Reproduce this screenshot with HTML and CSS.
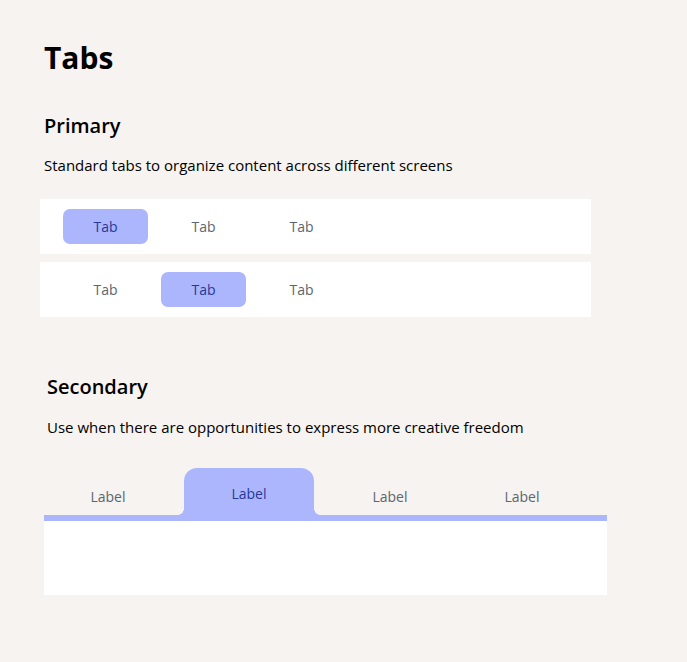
FILE: index.html
```html
<!DOCTYPE html>
<html lang="en">
<head>
<meta charset="utf-8">
<title>Tabs</title>
<link rel="stylesheet" href="styles.css">
</head>
<body>
<main class="page">
  <h1 class="title">Tabs</h1>

  <section class="primary">
    <h2 class="section-title">Primary</h2>
    <p class="section-desc">Standard tabs to organize content across different screens</p>
    <div class="pill-bar">
      <div class="pill-tab is-active">Tab</div>
      <div class="pill-tab">Tab</div>
      <div class="pill-tab">Tab</div>
    </div>
    <div class="pill-bar">
      <div class="pill-tab">Tab</div>
      <div class="pill-tab is-active">Tab</div>
      <div class="pill-tab">Tab</div>
    </div>
  </section>

  <section class="secondary">
    <h2 class="section-title">Secondary</h2>
    <p class="section-desc">Use when there are opportunities to express more creative freedom</p>
    <div class="folder">
      <div class="folder-tabs">
        <div class="folder-tab t1">Label</div>
        <div class="folder-tab t2 is-active">Label</div>
        <div class="folder-tab t3">Label</div>
        <div class="folder-tab t4">Label</div>
      </div>
      <div class="folder-line"></div>
      <div class="folder-panel"></div>
    </div>
  </section>
</main>
</body>
</html>
```

FILE: styles.css
```css
* { box-sizing: border-box; }

html, body {
  margin: 0;
  background: #f6f3f0;
}

body {
  font-family: "Open Sans", "Noto Sans", sans-serif;
  color: #000;
}

.page {
  padding: 38px 0 0 44px;
}

.title {
  margin: 0;
  font-size: 30px;
  font-weight: 700;
  line-height: 40px;
}

.section-title {
  margin: 0;
  font-size: 20px;
  font-weight: 600;
  line-height: 28px;
}

.section-desc {
  margin: 15px 0 0;
  font-size: 15px;
  line-height: 20px;
}

.primary {
  margin-top: 34px;
}

.pill-bar {
  margin-left: -4px;
  width: 551px;
  height: 55px;
  background: #fff;
  display: flex;
  gap: 13px;
  padding: 10px 0 0 23px;
}

.primary .section-desc + .pill-bar {
  margin-top: 24px;
}

.pill-bar + .pill-bar {
  margin-top: 8px;
}

.pill-tab {
  width: 85px;
  height: 35px;
  border-radius: 7px;
  display: flex;
  align-items: center;
  justify-content: center;
  font-size: 14px;
  color: #5b6570;
}

.pill-tab.is-active {
  background: #abb6fd;
  color: #27389a;
}

.secondary {
  margin-top: 56px;
}

.secondary .section-title,
.secondary .section-desc {
  margin-left: 3px;
}

.secondary .section-desc {
  margin-top: 16px;
}

.folder {
  margin-top: 31px;
  width: 563px;
}

.folder-tabs {
  display: flex;
  height: 47px;
}

.folder-tab {
  font-size: 14px;
  line-height: 19px;
  color: #5b6570;
  text-align: center;
  padding-top: 19px;
  position: relative;
}

.folder-tab.t1 { width: 128px; margin-right: 12px; }
.folder-tab.t2 { width: 130px; }
.folder-tab.t3 { width: 152px; }
.folder-tab.t4 { width: 112px; }

.folder-tab.is-active {
  background: #abb6fd;
  color: #27389a;
  border-radius: 13px 13px 0 0;
  padding-top: 16px;
}

.folder-tab.is-active::before,
.folder-tab.is-active::after {
  content: "";
  position: absolute;
  bottom: 0;
  width: 6px;
  height: 6px;
}

.folder-tab.is-active::before {
  left: -6px;
  background: radial-gradient(circle at 0 0, transparent 5.5px, #abb6fd 6px);
}

.folder-tab.is-active::after {
  right: -6px;
  background: radial-gradient(circle at 100% 0, transparent 5.5px, #abb6fd 6px);
}

.folder-line {
  height: 6px;
  background: #abb6fd;
}

.folder-panel {
  height: 74px;
  background: #fff;
}
```
